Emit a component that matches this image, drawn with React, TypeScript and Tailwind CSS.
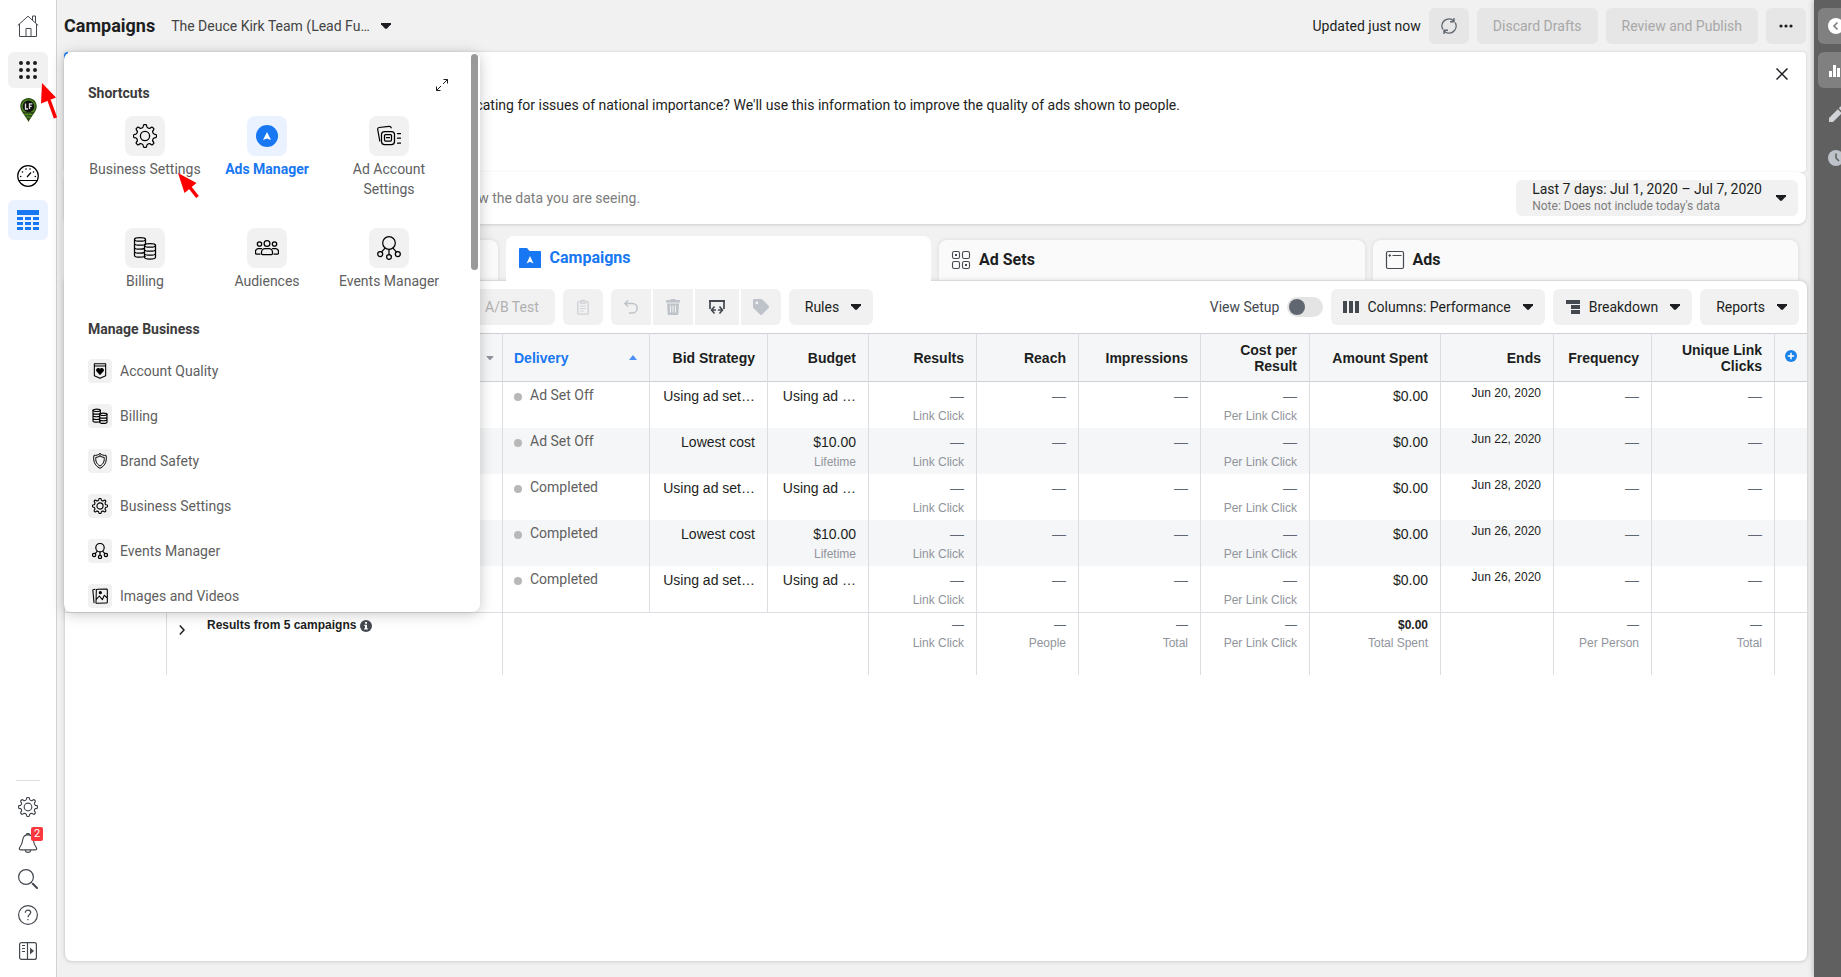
import React from "react";
import type { ReactNode } from "react";

type IconProps = { size?: number; className?: string; stroke?: number };

function polar(r: number, deg: number) {
  const a = (deg * Math.PI) / 180;
  return `${(12 + r * Math.cos(a)).toFixed(2)} ${(12 + r * Math.sin(a)).toFixed(2)}`;
}

function gearPath() {
  let d = "";
  for (let i = 0; i < 8; i++) {
    const a = i * 45 - 90;
    d += `${i === 0 ? "M" : "L"}${polar(9.2, a - 12)} Q${polar(11.4, a - 9)} ${polar(11.5, a - 4)} L${polar(11.5, a + 4)} Q${polar(11.4, a + 9)} ${polar(9.2, a + 12)} Q${polar(7.9, a + 22.5)} ${polar(9.2, a + 33)} `;
  }
  return d + "Z";
}
const GEAR = gearPath();

function Svg({ size = 24, className, stroke = 1.25, children }: IconProps & { children: ReactNode }) {
  return (
    <svg
      width={size}
      height={size}
      viewBox="0 0 24 24"
      fill="none"
      stroke="currentColor"
      strokeWidth={stroke}
      strokeLinejoin="round"
      strokeLinecap="round"
      className={className}
      aria-hidden="true"
    >
      {children}
    </svg>
  );
}

const GearIcon = (p: IconProps) => (
  <Svg {...p}>
    <path d={GEAR} />
    <circle cx="12" cy="12" r="4.6" />
  </Svg>
);

const CoinsIcon = (p: IconProps) => (
  <Svg {...p}>
    <ellipse cx="7" cy="3.4" rx="5.5" ry="1.8" />
    <path d="M1.500 3.400v16c0 1 2.500 1.800 5.500 1.800 2.200 0 4.200-.4 5.200-1M12.500 3.400v5.200M1.500 7.400c0 1 2.500 1.800 5.500 1.800s5.500-.8 5.500-1.800M1.500 11.400c0 1 2.500 1.800 5.500 1.800 1.800 0 3.500-.3 4.500-.8M1.500 15.400c0 1 2.500 1.800 5.500 1.800 1.800 0 3.500-.3 4.500-.8" />
    <ellipse cx="17" cy="9.400" rx="5.500" ry="1.800" />
    <path d="M11.500 9.400v11.800c0 1 2.500 1.800 5.500 1.800s5.500-.8 5.500-1.800V9.400M11.500 13.400c0 1 2.500 1.800 5.500 1.800s5.500-.8 5.500-1.800M11.500 17.400c0 1 2.500 1.800 5.500 1.800s5.500-.8 5.500-1.800" />
  </Svg>
);

const EventsIcon = (p: IconProps) => (
  <Svg {...p}>
    <circle cx="12" cy="7" r="6.300" />
    <circle cx="3.200" cy="18" r="2.500" />
    <circle cx="12" cy="21" r="2.400" />
    <circle cx="20.800" cy="18" r="2.500" />
    <path d="M12 13.500v5M8 12.200 4.700 15.800M16 12.200l3.300 3.600" />
  </Svg>
);

const AudienceIcon = (p: IconProps) => (
  <Svg {...p}>
    <circle cx="12" cy="7.500" r="2.900" />
    <circle cx="4.500" cy="8" r="2.200" />
    <circle cx="19.500" cy="8" r="2.200" />
    <path d="M6.500 17.500v-1.300c0-2 1.500-3.700 3.500-3.700h4c2 0 3.500 1.700 3.500 3.700v1.300c0 .6-.5 1-1 1h-9c-.5 0-1-.4-1-1zM6.500 12.500H3.500c-1.600 0-3 1.400-3 3v1.500c0 .6.400 1 1 1h3.500M17.500 12.500h3c1.600 0 3 1.400 3 3v1.500c0 .6-.4 1-1 1H19" />
  </Svg>
);

const AccountSettingsIcon = (p: IconProps) => (
  <Svg {...p}>
    <rect x="4.500" y="7.500" width="13" height="13" rx="3" />
    <rect x="7.500" y="10.500" width="7" height="6.500" rx="1" />
    <path d="M9.500 13.700h3M2.800 17 .7 5.500c-.1-1 .4-1.800 1.400-2L12 2.300c1-.1 1.900.5 2.200 1.500M20.500 9.500h3M20.500 14.200h3M20.500 19h3" />
  </Svg>
);

const QualityIcon = (p: IconProps) => (
  <Svg {...p}>
    <path d="M3.500 1h17v18L12 23l-8.500-4zM3.500 4.500h17" />
    <path d="M12 17 7.500 12.300C6 10 7.700 8.200 9.700 8.300c1 .1 1.800.7 2.300 1.500.5-.8 1.300-1.400 2.300-1.500 2-.1 3.700 1.700 2.200 4z" fill="currentColor" />
  </Svg>
);

const ShieldIcon = (p: IconProps) => (
  <Svg {...p}>
    <path d="M12 1c2.500 2 5.500 2.800 9 2.500 1.500 7 0 15-9 19.500C3 18.500 1.500 10.500 3 3.500 6.500 3.800 9.500 3 12 1z" />
    <path d="M12 4.500c2 1.300 4 2 6.200 2 .8 5-.7 10-6.200 13-5.500-3-7-8-6.200-13 2.200 0 4.200-.7 6.200-2z" />
  </Svg>
);

const ImagesIcon = (p: IconProps) => (
  <Svg {...p}>
    <path d="M7.500 2 22 1.500c.6 0 1 .4 1 1v19c0 .6-.4 1-1 1L7 23c-.6 0-1-.4-1-1L6.500 3c0-.6.400-1 1-1zM4.500 2 2 2.500c-.5.100-.8.600-.7 1.100L3 22M6.500 17l4.500-5 4.500 5.500 3-6.500 4.500 4" />
    <circle cx="12.500" cy="7" r="1.600" fill="currentColor" />
  </Svg>
);

const Caret = ({ className = "text-[#1c1e21]" }: { className?: string }) => (
  <svg width="10" height="6" viewBox="0 0 10 6" className={`shrink-0 ${className}`} aria-hidden="true">
    <path d="M0 0h10v1.300L6 5.500c-.6.600-1.400.6-2 0L0 1.300z" fill="currentColor" />
  </svg>
);

const shortcuts: { label: string; icon: ReactNode; active?: boolean }[] = [
  { label: "Business Settings", icon: <GearIcon /> },
  {
    label: "Ads Manager",
    active: true,
    icon: (
      <svg width="22" height="22" viewBox="0 0 22 22" aria-hidden="true">
        <circle cx="11" cy="11" r="11" fill="#1877f2" />
        <path d="M11 7 15 15l-4-1.500L7 15z" fill="#fff" />
      </svg>
    ),
  },
  { label: "Ad Account Settings", icon: <AccountSettingsIcon /> },
  { label: "Billing", icon: <CoinsIcon /> },
  { label: "Audiences", icon: <AudienceIcon /> },
  { label: "Events Manager", icon: <EventsIcon /> },
];

const manage: { label: string; icon: ReactNode }[] = [
  { label: "Account Quality", icon: <QualityIcon size={16} stroke={1.6} /> },
  { label: "Billing", icon: <CoinsIcon size={16} stroke={1.7} /> },
  { label: "Brand Safety", icon: <ShieldIcon size={16} stroke={1.5} /> },
  { label: "Business Settings", icon: <GearIcon size={16} stroke={1.7} /> },
  { label: "Events Manager", icon: <EventsIcon size={16} stroke={1.8} /> },
  { label: "Images and Videos", icon: <ImagesIcon size={16} stroke={1.6} /> },
];

function ShortcutsMenu() {
  return (
    <div className="absolute top-[52px] left-[64px] z-30 h-[560px] w-[416px] overflow-hidden rounded-lg bg-white text-[#606060] shadow-[0_2px_14px_rgba(0,0,0,0.22)]">
      <div className="px-5 pt-[31px]">
        <div className="flex justify-between pr-3 pl-1">
          <h2 className="text-sm leading-5 font-bold text-[#3c3c3c]">Shortcuts</h2>
          <button aria-label="Expand" className="-mt-1 flex h-3.5 items-start text-[#1c1e21]">
            <svg width="12" height="12" viewBox="0 0 12 12" fill="none" stroke="currentColor" aria-hidden="true">
              <path d="M7.500.5h4v4M11.500.5 7 5M4.500 11.500h-4v-4M.5 11.500 5 7" />
            </svg>
          </button>
        </div>
        <div className="mt-[13px] grid w-[366px] grid-cols-3">
          {shortcuts.map((s) => (
            <a key={s.label} href="#" className="flex h-28 flex-col items-center gap-[3px] text-center text-sm leading-5">
              <span
                className={`flex size-10 items-center justify-center rounded-lg ${s.active ? "bg-[#ebf2ff]" : "bg-[#f1f1f1] text-black"}`}
              >
                {s.icon}
              </span>
              <span className={`max-w-[116px] ${s.active ? "font-bold text-[#1877f2]" : ""}`}>{s.label}</span>
            </a>
          ))}
        </div>
        <h2 className="mt-[-21px] pl-1 text-sm leading-5 font-bold text-[#3c3c3c]">Manage Business</h2>
        <ul className="mt-5 pl-1">
          {manage.map((m) => (
            <li key={m.label} className="h-[45px]">
              <a href="#" className="flex h-6 items-center gap-2 text-sm">
                <span className="flex size-6 items-center justify-center rounded bg-[#f1f1f1] text-black">{m.icon}</span>
                {m.label}
              </a>
            </li>
          ))}
        </ul>
      </div>
      <div className="absolute top-0.5 right-0.5 h-[216px] w-[7px] rounded bg-[#999]" />
    </div>
  );
}

function Sidebar() {
  return (
    <nav className="flex w-[57px] shrink-0 flex-col items-center border-r border-[#d2d2d2] bg-white pb-2 text-[#444950]">
      <a href="#" aria-label="Home" className="flex h-[52px] items-center">
        <svg width="22" height="22" viewBox="0 0 22 22" fill="none" stroke="currentColor" aria-hidden="true">
          <path d="M.7 10.500 11 1.200l10.300 9.300M2.500 9v12.500h17V9M15.500 5.200V1h3v7M9 21.500v-8h5v8" />
        </svg>
      </a>
      <button aria-label="All tools" className="flex h-9 w-10 items-center justify-center rounded-md bg-[#f1f1f1] text-[#1c1e21]">
        <svg width="18" height="18" viewBox="0 0 18 18" fill="currentColor" aria-hidden="true">
          {[2, 9, 16].map((y) => [2, 9, 16].map((x) => <circle key={`${x}-${y}`} cx={x} cy={y} r="2" />))}
        </svg>
      </button>
      <a href="#" aria-label="Business account" className="mt-2.5 h-[54px]">
        <svg width="17" height="24" viewBox="0 0 17 24" aria-hidden="true">
          <path d="M8.500 0C3.800 0 .3 3.600.3 8.200c0 3 1.500 5.300 3.500 8.300 2 3 4 5.500 4.700 7.500.7-2 2.700-4.500 4.700-7.500 2-3 3.500-5.300 3.500-8.300C16.700 3.600 13.200 0 8.500 0z" fill="#2b4a17" />
          <path d="M8.500 1.200a7 7 0 0 0-7 7c0 2 .8 3.800 2 5.800h10c1.200-2 2-3.800 2-5.800a7 7 0 0 0-7-7z" fill="#4f8a1e" />
          <circle cx="8.500" cy="8.400" r="5.800" fill="#111" />
          <path d="M5.500 5.500v5.500H8M9.500 11V5.800h2.800M9.500 8.300h2.200" stroke="#ddd" strokeWidth="1.300" fill="none" />
          <path d="M4.500 16.300h8M6.300 19h4.400" stroke="#63a82b" />
        </svg>
      </a>
      <a href="#" aria-label="Account overview" className="mt-[13px] flex h-[22px] text-black">
        <svg width="22" height="22" viewBox="0 0 22 22" fill="none" stroke="currentColor" aria-hidden="true">
          <circle cx="11" cy="11" r="10.300" strokeWidth="1.200" />
          <path d="M1.500 15.500h19M10 12l4-4.500" strokeWidth="1.200" />
          <g fill="currentColor" stroke="none">
            <circle cx="3.700" cy="11.500" r=".8" />
            <circle cx="5.500" cy="7" r=".8" />
            <circle cx="9" cy="4" r=".8" />
            <circle cx="13" cy="4" r=".8" />
            <circle cx="16.500" cy="7" r=".8" />
            <circle cx="18.300" cy="11.500" r=".8" />
          </g>
        </svg>
      </a>
      <a href="#" aria-label="Ads table" className="mt-[13px] flex size-10 items-center justify-center rounded-md bg-[#ebf2ff] text-[#1877f2]">
        <svg width="22" height="20" viewBox="0 0 22 20" fill="currentColor" aria-hidden="true">
          <path d="M0 0h22v5H0zM0 7h6v3H0zM8 7h6v3H8zM16 7h6v3h-6zM0 12h6v3H0zM8 12h6v3H8zM16 12h6v3h-6zM0 17h6v3H0zM8 17h6v3H8zM16 17h6v3h-6z" />
        </svg>
      </a>
      <div className="mt-auto flex flex-col items-center">
        <hr className="mb-2 w-6 border-[#dadde1]" />
        <button aria-label="Settings" className="flex h-9 items-center">
          <GearIcon size={20} stroke={1.4} />
        </button>
        <button aria-label="Notifications" className="relative flex h-9 items-center">
          <svg width="20" height="20" viewBox="0 0 20 20" fill="none" stroke="currentColor" strokeWidth="1.200" aria-hidden="true">
            <path d="M10 1.800c-3 0-4.800 1.900-5.200 4.700C4.200 10.500 4 11.500 2 14c-1 1.300-.9 2.800.5 2.800h15c1.400 0 1.500-1.500.5-2.800-2-2.500-2.200-3.500-2.800-7.500C14.800 3.700 13 1.800 10 1.800zM8.300 1.900C8.300 0 11.700 0 11.700 1.900M7.300 17c.3 3.200 5.100 3.200 5.400 0" />
          </svg>
          <span className="absolute top-0.5 left-[13px] h-3.5 w-3 rounded-xs bg-[#fa383e] text-center text-[11px] leading-3.5 text-white">2</span>
        </button>
        <button aria-label="Search" className="flex h-9 items-center">
          <svg width="20" height="20" viewBox="0 0 20 20" fill="none" stroke="currentColor" strokeLinecap="round" aria-hidden="true">
            <circle cx="8" cy="8" r="7.400" strokeWidth="1.200" />
            <path d="m13.300 13.300 1.500 1.500" />
            <path d="m14.800 14.800 4.200 4.200" strokeWidth="2" />
          </svg>
        </button>
        <button aria-label="Help" className="flex h-9 items-center">
          <svg width="20" height="20" viewBox="0 0 20 20" fill="none" stroke="currentColor" strokeWidth="1.200" aria-hidden="true">
            <circle cx="10" cy="10" r="9.400" />
            <path d="M7.300 7.800c0-1.700 1.200-2.700 2.700-2.700s2.700 1 2.700 2.500c0 2-2.700 2-2.700 4.600M10 14v1.300" />
          </svg>
        </button>
        <button aria-label="Collapse" className="flex h-9 items-center">
          <svg width="18" height="18" viewBox="0 0 18 18" fill="none" stroke="currentColor" strokeWidth="1.200" aria-hidden="true">
            <rect x=".6" y=".6" width="16.800" height="16.800" rx="2" />
            <path d="M8.500.5v17M3 3.500h3M3 6.500h3M3 9.500h3" />
            <path d="M11 5.500v7L15 9z" fill="currentColor" stroke="none" />
          </svg>
        </button>
      </div>
    </nav>
  );
}

function Header() {
  return (
    <header className="flex h-[52px] items-center justify-between pr-2 pl-[7px] text-sm">
      <div className="flex items-center gap-4">
        <h1 className="text-lg font-bold text-[#1c1e21]">Campaigns</h1>
        <label className="flex items-center gap-2.5">
          <select aria-label="Ad account" className="w-[200px] appearance-none bg-transparent text-[#444]">
            <option>The Deuce Kirk Team (Lead Fu…</option>
          </select>
          <Caret />
        </label>
      </div>
      <div className="flex items-center gap-2">
        <span className="text-[#1c1e21]">Updated just now</span>
        <button aria-label="Refresh" className="flex h-9 w-10 items-center justify-center rounded-md bg-[#e6e6e6] text-[#606770]">
          <svg width="16" height="16" viewBox="0 0 16 16" fill="none" stroke="currentColor" strokeWidth="1.400" aria-hidden="true">
            <path d="M1.800 11.300A7 7 0 0 1 12.700 2.800M14.200 4.700A7 7 0 0 1 3.300 13.200M13 0v3.700H9M3 16v-3.700h4" />
          </svg>
        </button>
        <button disabled className="h-9 rounded-md bg-[#e6e6e6] px-4 text-[#a8a8a8]">
          Discard Drafts
        </button>
        <button disabled className="h-9 rounded-md bg-[#e6e6e6] px-4 text-[#a8a8a8]">
          Review and Publish
        </button>
        <button aria-label="More" className="flex h-9 w-10 items-center justify-center rounded-md bg-[#e6e6e6] text-[#1c1e21]">
          <svg width="14" height="4" viewBox="0 0 14 4" fill="currentColor" aria-hidden="true">
            <circle cx="2" cy="2" r="1.600" />
            <circle cx="7" cy="2" r="1.600" />
            <circle cx="12" cy="2" r="1.600" />
          </svg>
        </button>
      </div>
    </header>
  );
}

const inactiveTab =
  "mb-px flex h-10 min-w-0 flex-1 items-center gap-2 rounded-t-lg bg-[#fafafa] px-3 font-bold text-[#1c1e21] shadow-[0_0_4px_rgba(0,0,0,0.1)]";

function Tabs() {
  return (
    <div role="tablist" className="flex items-end gap-2 px-2 pt-3 text-base">
      <button role="tab" aria-selected="false" className={inactiveTab}>
        Account Overview
      </button>
      <button
        role="tab"
        aria-selected="true"
        className="relative z-10 flex h-[45px] min-w-0 flex-1 items-center gap-2 rounded-t-lg bg-white px-3 pb-0.5 font-bold text-[#1877f2]"
      >
        <svg width="24" height="20" viewBox="0 0 24 20" aria-hidden="true">
          <path d="M1 1c0-.6.400-1 1-1h7l2.500 3H22c.6 0 1 .4 1 1v15c0 .6-.4 1-1 1H2c-.6 0-1-.4-1-1z" fill="#1877f2" />
          <path d="M12 8l3.500 7.500-3.500-1.700-3.500 1.700z" fill="#fff" />
        </svg>
        Campaigns
      </button>
      <button role="tab" aria-selected="false" className={inactiveTab}>
        <svg width="20" height="20" viewBox="0 0 20 20" fill="none" stroke="#444950" strokeWidth="1.100" aria-hidden="true">
          <rect x="1.500" y="1.500" width="7" height="7" rx="1.800" />
          <rect x="11.500" y="1.500" width="7" height="7" rx="1.800" />
          <rect x="1.500" y="11.500" width="7" height="7" rx="1.800" />
          <rect x="11.500" y="11.500" width="7" height="7" rx="1.800" />
          <path d="M4 4h2v2H4zM14 14h2v2h-2z" fill="#444950" stroke="none" />
        </svg>
        Ad Sets
      </button>
      <button role="tab" aria-selected="false" className={inactiveTab}>
        <svg width="20" height="20" viewBox="0 0 20 20" fill="none" stroke="#444950" strokeWidth="1.200" aria-hidden="true">
          <rect x="1.500" y="1.500" width="17" height="17" rx="1.500" />
          <path d="M7.500 5.500h9M3.500 5.500h2.500M4.700 4.300v2.400" />
        </svg>
        Ads
      </button>
    </div>
  );
}

const toolBtn = "flex h-9 items-center justify-center bg-[#f1f1f1]";

function Toolbar() {
  return (
    <div className="flex items-center justify-between py-2 pr-2 pl-[404px] text-sm text-[#1c1e21]">
      <div className="flex gap-2">
        <button disabled className={`${toolBtn} rounded-md px-4 text-[#b0b0b0]`}>
          A/B Test
        </button>
        <button aria-label="Paste" disabled className={`${toolBtn} w-10 rounded-md text-[#d4d6da]`}>
          <svg width="12" height="16" viewBox="0 0 12 16" fill="none" stroke="currentColor" aria-hidden="true">
            <rect x=".8" y="2.800" width="10.400" height="12.400" rx="1" strokeWidth="1.600" />
            <path d="M3.500 1.500h5v3h-5zM6 0v2M3 7h6M3 9.500h6M3 12h4" />
          </svg>
        </button>
        <div className="flex gap-0.5">
          <button aria-label="Undo" disabled className={`${toolBtn} w-10 rounded-l-md text-[#bec3c9]`}>
            <svg width="14" height="14" viewBox="0 0 14 14" fill="none" stroke="currentColor" strokeWidth="1.500" aria-hidden="true">
              <path d="M4 .5.8 3.500 4 6.500M1 3.500h7.500a4.700 4.700 0 0 1 0 9.400H5" />
            </svg>
          </button>
          <button aria-label="Delete" disabled className={`${toolBtn} w-10 text-[#bec3c9]`}>
            <svg width="14" height="16" viewBox="0 0 14 16" fill="currentColor" aria-hidden="true">
              <path d="M5 0h4l.7 1H13c.6 0 1 .4 1 1v1.500H0V2c0-.6.400-1 1-1h3.300zM1 4.500h12L12.300 15c0 .6-.4 1-1 1H2.700c-.6 0-1-.4-1-1z" />
              <path d="M4.500 6.500v7M7 6.500v7M9.500 6.500v7" stroke="#f1f1f1" strokeWidth="1.100" />
            </svg>
          </button>
          <button aria-label="Import and export" className={`${toolBtn} w-11 text-[#444950]`}>
            <svg width="16" height="15" viewBox="0 0 16 15" fill="none" stroke="currentColor" strokeWidth="1.700" aria-hidden="true">
              <path d="M1 9V1h14v8" />
              <path d="M0 1h16" strokeWidth="2" />
              <path d="M5.500 6.500 2.500 10l3 3.500M10.500 6.500l3 3.500-3 3.500M3 10h4M9 10h4" strokeWidth="1.600" />
            </svg>
          </button>
          <button aria-label="Tag" disabled className={`${toolBtn} w-10 rounded-r-md text-[#bec3c9]`}>
            <svg width="16" height="16" viewBox="0 0 16 16" aria-hidden="true">
              <path d="M0 1.500C0 .7.700 0 1.500 0H8c.5 0 1 .2 1.400.6l6 6c.8.800.8 1.900 0 2.700l-6 6c-.8.800-1.900.8-2.700 0l-6-6C.2 9 0 8.500 0 8z" fill="currentColor" />
              <circle cx="3.800" cy="3.800" r="1.500" fill="#f1f1f1" />
            </svg>
          </button>
        </div>
        <button aria-haspopup="menu" className={`${toolBtn} gap-3 rounded-md pr-3 pl-4`}>
          Rules <Caret />
        </button>
      </div>
      <div className="flex items-center gap-2">
        <label className="flex items-center gap-2">
          <span className="text-[#444950]">View Setup</span>
          <input type="checkbox" role="switch" className="peer sr-only" />
          <span className="flex h-5 w-9 items-center rounded-full bg-[#e4e4e4] px-0.5">
            <span className="size-4 rounded-full bg-[#606770]" />
          </span>
        </label>
        <button aria-haspopup="menu" className={`${toolBtn} gap-3 rounded-md px-3`}>
          <span className="flex items-center gap-2">
            <svg width="16" height="12" viewBox="0 0 16 12" fill="#444950" aria-hidden="true">
              <path d="M0 0h4v12H0zM6 0h4v12H6zM12 0h4v12h-4z" />
            </svg>
            Columns: Performance
          </span>
          <Caret />
        </button>
        <button aria-haspopup="menu" className={`${toolBtn} gap-3 rounded-md px-3`}>
          <span className="flex items-center gap-2">
            <svg width="16" height="14" viewBox="0 0 16 14" fill="#444950" aria-hidden="true">
              <path d="M1 0h14v4H1zM6 5h9v4H6zM6 10h9v4H6z" />
            </svg>
            Breakdown
          </span>
          <Caret />
        </button>
        <button aria-haspopup="menu" className={`${toolBtn} gap-3 rounded-md pr-3 pl-4`}>
          Reports <Caret />
        </button>
      </div>
    </div>
  );
}

type Row = { delivery: string; bid: string; budget: string; note?: string; ends: string };

const rows: Row[] = [
  { delivery: "Ad Set Off", bid: "Using ad set…", budget: "Using ad …", ends: "Jun 20, 2020" },
  { delivery: "Ad Set Off", bid: "Lowest cost", budget: "$10.00", note: "Lifetime", ends: "Jun 22, 2020" },
  { delivery: "Completed", bid: "Using ad set…", budget: "Using ad …", ends: "Jun 28, 2020" },
  { delivery: "Completed", bid: "Lowest cost", budget: "$10.00", note: "Lifetime", ends: "Jun 26, 2020" },
  { delivery: "Completed", bid: "Using ad set…", budget: "Using ad …", ends: "Jun 26, 2020" },
];

const colWidths = [
  "w-[102px]", "w-[336px]", "w-[147px]", "w-[118px]", "w-[101px]", "w-[108px]", "w-[102px]",
  "w-[122px]", "w-[109px]", "w-[131px]", "w-[113px]", "w-[98px]", "w-[123px]", "w-[32px]",
];

const edge = "border-r border-[#dadde1]";
const th = `border-y border-y-[#ced0d4] ${edge} pr-3 text-right font-bold`;

function Cell({ main, sub }: { main: string; sub?: string }) {
  return (
    <td className={`${edge} pt-1 pr-3 text-right align-top text-sm leading-5 whitespace-nowrap`}>
      <div className={main === "—" ? "text-[#606770]" : "text-[#1c1e21]"}>{main}</div>
      {sub && <div className="text-xs leading-5 text-[#90949c]">{sub}</div>}
    </td>
  );
}

function TotalCell({ main, sub }: { main: string; sub: string }) {
  return (
    <td className={`${edge} pt-1 pr-3 text-right align-top text-xs whitespace-nowrap`}>
      <div className={main === "—" ? "leading-4 text-[#606770]" : "leading-4 font-bold text-[#1c1e21]"}>{main}</div>
      <div className="leading-5 text-[#90949c]">{sub}</div>
    </td>
  );
}

function CampaignTable() {
  return (
    <table className="w-full table-fixed border-separate border-spacing-0 font-['Liberation_Sans',Arial,sans-serif]">
      <colgroup>
        {colWidths.map((w, i) => (
          <col key={i} className={w} />
        ))}
      </colgroup>
      <thead className="bg-[#f5f6f7] text-sm leading-4 text-[#1c1e21]">
        <tr className="h-[49px]">
          <th className={th} />
          <th className={`${edge} border-y border-y-[#ced0d4] pr-2 text-right`}>
            <Caret className="ml-auto h-1 w-2 text-[#90949c]" />
          </th>
          <th className={`${th} pl-[11px]`} aria-sort="ascending">
            <span className="flex items-center justify-between text-[#1877f2]">
              Delivery
              <svg width="8" height="5" viewBox="0 0 8 5" aria-hidden="true">
                <path d="M4 0 8 5H0z" fill="#4a90f5" />
              </svg>
            </span>
          </th>
          <th className={th}>Bid Strategy</th>
          <th className={th}>Budget</th>
          <th className={th}>Results</th>
          <th className={th}>Reach</th>
          <th className={th}>Impressions</th>
          <th className={`${th} pl-6`}>Cost per Result</th>
          <th className={th}>Amount Spent</th>
          <th className={th}>Ends</th>
          <th className={th}>Frequency</th>
          <th className={`${th} pl-6`}>Unique Link Clicks</th>
          <th className="border-y border-[#ced0d4] pb-1">
            <button aria-label="Add column" className="mx-auto block">
              <svg width="12" height="12" viewBox="0 0 12 12" aria-hidden="true">
                <circle cx="6" cy="6" r="6" fill="#1b82ea" />
                <path d="M6 2.800v6.400M2.800 6h6.400" stroke="#fff" strokeWidth="1.500" />
              </svg>
            </button>
          </th>
        </tr>
      </thead>
      <tbody>
        {rows.map((r, i) => (
          <tr key={i} className="h-[46px] even:bg-[#f5f6f7]">
            <td className={edge} />
            <td className={edge} />
            <td className={`${edge} pt-1 pl-[11px] align-top font-[Roboto,sans-serif] text-sm text-[#606060]`}>
              <span className="flex items-center gap-2 leading-[18px]">
                <span className="mt-1 size-2 rounded-full bg-[#b8b8b8]" />
                {r.delivery}
              </span>
            </td>
            <Cell main={r.bid} />
            <Cell main={r.budget} sub={r.note} />
            <Cell main="—" sub="Link Click" />
            <Cell main="—" />
            <Cell main="—" />
            <Cell main="—" sub="Per Link Click" />
            <Cell main="$0.00" />
            <td className={`${edge} pt-1 pr-3 text-right align-top text-xs leading-3.5 text-[#1c1e21]`}>{r.ends}</td>
            <Cell main="—" />
            <Cell main="—" />
            <td />
          </tr>
        ))}
      </tbody>
      <tfoot>
        <tr>
          <td colSpan={14} className="h-px bg-[#dadde1]" />
        </tr>
        <tr className="h-[62px]">
          <td className={edge} />
          <td className={`${edge} pt-1 pl-3 align-top text-xs leading-4 font-bold text-[#1c1e21]`}>
            <div className="flex items-start">
              <button aria-label="Expand results" className="mt-2 mr-[22px]">
                <svg width="6" height="10" viewBox="0 0 6 10" fill="none" stroke="currentColor" strokeWidth="1.500" aria-hidden="true">
                  <path d="m.8.600 4.200 4.400L.8 9.400" />
                </svg>
              </button>
              <span className="flex items-center gap-1">
                Results from 5 campaigns
                <svg width="12" height="12" viewBox="0 0 12 12" className="mt-0.5" aria-hidden="true">
                  <circle cx="6" cy="6" r="6" fill="#444950" />
                  <path d="M5 2h2v1.700H5zM4.300 4.800H7v3.500h.8v1.200H4.200V8.300H5V6h-.7z" fill="#fff" />
                </svg>
              </span>
            </div>
          </td>
          <td colSpan={3} className={edge} />
          <TotalCell main="—" sub="Link Click" />
          <TotalCell main="—" sub="People" />
          <TotalCell main="—" sub="Total" />
          <TotalCell main="—" sub="Per Link Click" />
          <TotalCell main="$0.00" sub="Total Spent" />
          <td className={edge} />
          <TotalCell main="—" sub="Per Person" />
          <TotalCell main="—" sub="Total" />
          <td />
        </tr>
      </tfoot>
    </table>
  );
}

function RightRail() {
  return (
    <aside className="relative z-20 flex w-[27px] shrink-0 flex-col gap-2 bg-[#606060] py-2 pl-1 shadow-[0_0_6px_rgba(0,0,0,0.3)]">
      <div className="flex flex-col gap-2 overflow-hidden">
        <button aria-label="Open panel" className="flex h-9 w-10 items-center rounded-md bg-[#808080] pl-2.5">
          <svg width="16" height="16" viewBox="0 0 16 16" aria-hidden="true">
            <circle cx="8" cy="8" r="8" fill="#fff" />
            <path d="M9.500 4.500 6 8l3.500 3.500" fill="none" stroke="#808080" strokeWidth="1.700" />
          </svg>
        </button>
        <button aria-label="Charts" className="flex h-9 w-10 items-center rounded-md bg-[#808080] pl-[11px]">
          <svg width="16" height="12" viewBox="0 0 16 12" fill="#fff" className="mt-0.5" aria-hidden="true">
            <path d="M0 6h3v6H0zM4 0h3v12H4zM8 3h3v9H8zM12 5h3v7h-3z" />
          </svg>
        </button>
        <button aria-label="Edit" className="flex h-9 w-10 items-center rounded-md pl-[11px]">
          <svg width="16" height="16" viewBox="0 0 16 16" fill="#d0d3d8" aria-hidden="true">
            <path d="M0 16v-4l8.800-8.700 3.900 3.900L4 16zM9.800 2.300 11.500.6c.6-.6 1.300-.6 1.900 0l2 2c.6.600.6 1.300 0 1.900l-1.700 1.700z" />
          </svg>
        </button>
        <button aria-label="History" className="flex h-9 w-10 items-center rounded-md pl-2.5">
          <svg width="16" height="16" viewBox="0 0 16 16" aria-hidden="true">
            <circle cx="8" cy="8" r="8" fill="#bec3c9" />
            <path d="M8 3.500V8l3 3" fill="none" stroke="#606060" strokeWidth="1.600" />
          </svg>
        </button>
      </div>
    </aside>
  );
}

export default function App() {
  return (
    <div className="relative flex min-h-screen overflow-hidden bg-[#f1f1f1] font-[Roboto,sans-serif]">
      <Sidebar />
      <main className="flex min-w-0 flex-1 flex-col">
        <Header />
        <section className="mr-2 ml-[7px] flex h-[120px] items-start justify-between rounded border-l-4 border-[#1877f2] bg-white pt-4 pr-[18px] pl-5 text-sm text-[#1c1e21] shadow-[0_0_3px_rgba(0,0,0,0.15)]">
          <p className="pt-[27px] pl-[71px]">
            Are you creating ads about politics, or are you advocating for issues of national importance? We'll use this
            information to improve the quality of ads shown to people.
          </p>
          <button aria-label="Close">
            <svg width="12" height="12" viewBox="0 0 12 12" stroke="currentColor" strokeWidth="1.500" aria-hidden="true">
              <path d="m.5.500 11 11M11.500.5l-11 11" />
            </svg>
          </button>
        </section>
        <section className="mr-2 ml-[7px] flex h-[52px] items-center justify-between rounded-lg bg-white pr-2 pl-[261px] text-sm shadow-[0_1px_3px_rgba(0,0,0,0.15)]">
          <input
            type="text"
            aria-label="Search and filter"
            placeholder="Search and filter to narrow the data you are seeing."
            className="h-9 min-w-0 flex-1 bg-transparent outline-none placeholder:text-[#7d7d7d]"
          />
          <button aria-haspopup="dialog" className="flex h-9 items-center gap-3.5 rounded-md bg-[#f1f1f1] pr-3 pl-4 text-left">
            <span className="pb-0.5">
              <span className="block leading-[18px] text-[#1c1e21]">Last 7 days: Jul 1, 2020 – Jul 7, 2020</span>
              <span className="block text-xs leading-4 text-[#7d7d7d]">Note: Does not include today's data</span>
            </span>
            <Caret />
          </button>
        </section>
        <div className="mr-1.5 ml-[7px] flex flex-1 flex-col pb-[15px]">
          <div className="pr-0.5">
            <Tabs />
          </div>
          <section className="-mt-px flex-1 rounded-lg rounded-tl-none border border-[#dadada] bg-white shadow-[0_0_4px_rgba(0,0,0,0.12)]">
            <Toolbar />
            <CampaignTable />
          </section>
        </div>
      </main>
      <RightRail />
      <ShortcutsMenu />
      <svg width="16" height="36" viewBox="0 0 16 36" className="absolute top-[83px] left-[41px] z-40" aria-hidden="true">
        <path d="M1 0 15 14.500 0 20.500z" fill="#f00" />
        <path d="M8 17l6.500 18" stroke="#f00" strokeWidth="3.500" />
      </svg>
      <svg width="22" height="26" viewBox="0 0 22 26" className="absolute top-[173px] left-[178px] z-40" aria-hidden="true">
        <path d="M0 0 18.500 10 6.500 20z" fill="#f00" />
        <path d="M12 14.500 19.500 24" stroke="#f00" strokeWidth="3.500" />
      </svg>
    </div>
  );
}
